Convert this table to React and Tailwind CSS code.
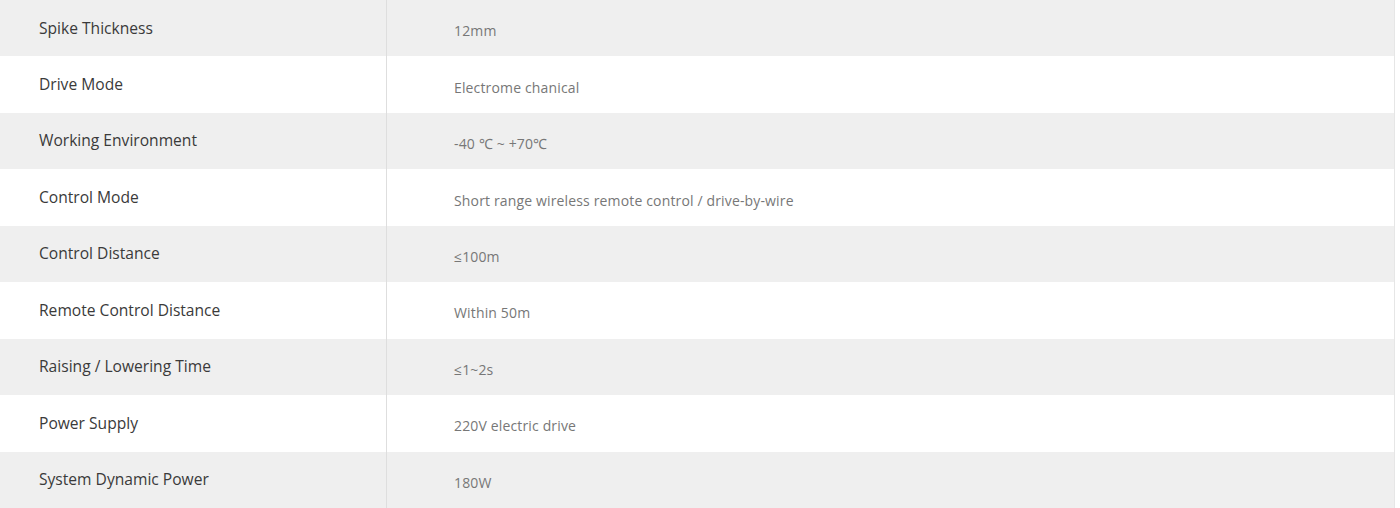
import React from 'react';

const SPECS = [
  ['Spike Thickness', '12mm'],
  ['Drive Mode', 'Electrome chanical'],
  ['Working Environment', '-40 ℃ ~ +70℃'],
  ['Control Mode', 'Short range wireless remote control / drive-by-wire'],
  ['Control Distance', '≤100m'],
  ['Remote Control Distance', 'Within 50m'],
  ['Raising / Lowering Time', '≤1~2s'],
  ['Power Supply', '220V electric drive'],
  ['System Dynamic Power', '180W'],
];

export default function App() {
  return (
    <div className="w-[1400px] h-[508px] bg-white font-['Open_Sans',sans-serif]">
      <div className="grid grid-rows-9 h-full w-[1395px] border-r border-[#e6e6e6]">
        {SPECS.map(([label, value], idx) => (
          <div
            key={label}
            className={`grid grid-cols-[387px_1fr] items-stretch ${idx % 2 === 0 ? 'bg-[#efefef]' : 'bg-white'}`}
          >
            <div className="flex items-center pl-[39px] border-r border-[#dedede] text-[15.6px] text-[#3a3a3a]">
              {label}
            </div>
            <div className="flex items-center pl-[67px] pt-[5px] text-[14px] text-[#777] tracking-[0.15px]">
              {value}
            </div>
          </div>
        ))}
      </div>
    </div>
  );
}
